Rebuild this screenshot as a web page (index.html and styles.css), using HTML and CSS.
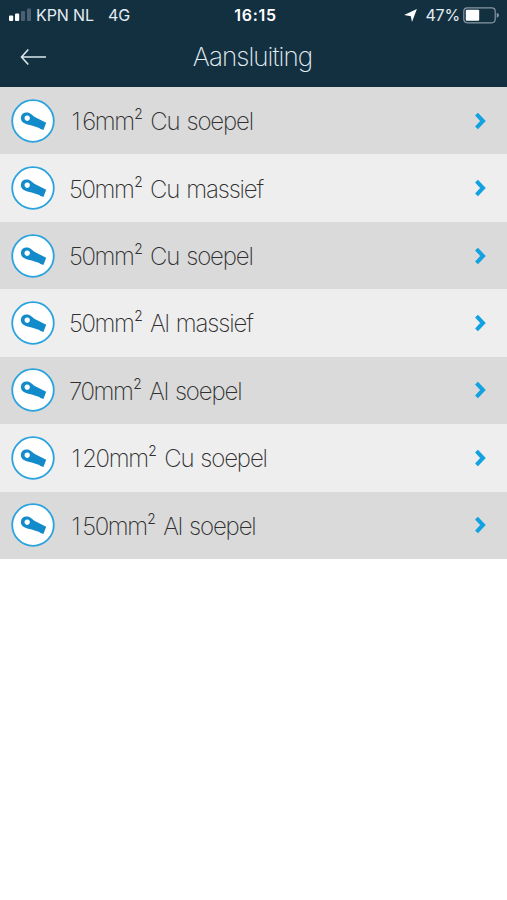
FILE: index.html
```html
<!DOCTYPE html>
<html lang="nl">
<head>
<meta charset="utf-8">
<title>Aansluiting</title>
<link rel="stylesheet" href="styles.css">
</head>
<body>
<svg class="defs" width="0" height="0" aria-hidden="true">
  <symbol id="lug" viewBox="0 0 44 44">
    <circle cx="22" cy="22" r="20.8" fill="#fff" stroke="#2ba3de" stroke-width="1.8"/>
    <path fill="#138bcb" fill-rule="evenodd" d="M9.900 18.500C10.200 15.300 12.500 13.700 15.500 13.600C19.500 13.500 20.800 16.200 23.300 17.700L35.200 23.800L32.400 30.900L29 29.700L28.300 29L20.700 26.600C17.500 25.500 15 25.300 12.500 23.700C10.600 22.400 9.700 20.700 9.900 18.500ZM16.200 16.500a2.700 2.700 0 1 0 .01 0Z"/>
  </symbol>
  <symbol id="chevron" viewBox="0 0 14 20">
    <path d="M2.500 3.200 9 10 2.500 16.800" fill="none" stroke="#12a2e2" stroke-width="4"/>
  </symbol>
</svg>
<header class="header">
  <div class="status">
    <div class="status-left">
      <svg class="signal" width="24" height="14" viewBox="0 0 24 14"><g fill="#fff"><rect x="1" y="7.500" width="4.200" height="5.500" rx="1"/><rect x="7" y="5.500" width="4.200" height="7.500" rx="1"/></g><g fill="#4b6071"><rect x="13" y="3" width="4" height="10" rx="1"/><rect x="19" y="0.500" width="4" height="12.500" rx="1"/></g></svg>
      <span class="carrier">KPN NL</span>
      <span class="network">4G</span>
    </div>
    <span class="time">16:15</span>
    <div class="status-right">
      <svg class="location" width="13" height="13" viewBox="0 0 13 13"><path d="M12.900.1 8 12.900 6.800 7.300.1 6Z" fill="#fff"/></svg>
      <span class="percent">47%</span>
      <svg class="battery" width="37" height="17" viewBox="0 0 37 17"><rect x=".8" y=".8" width="31.400" height="15" rx="3.500" fill="none" stroke="#8796a2" stroke-width="1.200"/><rect x="2.800" y="2.800" width="13.400" height="11" rx="1" fill="#fff"/><path d="M33.700 5.800Q36 6.500 36 8.300T33.700 10.800Z" fill="#8796a2"/></svg>
    </div>
  </div>
  <div class="nav">
    <svg class="back" width="28" height="18" viewBox="0 0 28 18"><path d="M8.300 1.500 1.500 9l6.800 7.500M1.500 9H26" fill="none" stroke="#dce7ec" stroke-width="1.600"/></svg>
    <h1 class="title">Aansluiting</h1>
  </div>
</header>
<main class="list">
  <div class="row"><svg class="icon"><use href="#lug"/></svg><span class="label"><span class="size"><span class="one">1</span>6mm</span><span class="power">²</span> Cu soepel</span><svg class="chevron"><use href="#chevron"/></svg></div>
  <div class="row"><svg class="icon"><use href="#lug"/></svg><span class="label"><span class="size">50mm</span><span class="power">²</span> Cu massief</span><svg class="chevron"><use href="#chevron"/></svg></div>
  <div class="row"><svg class="icon"><use href="#lug"/></svg><span class="label"><span class="size">50mm</span><span class="power">²</span> Cu soepel</span><svg class="chevron"><use href="#chevron"/></svg></div>
  <div class="row"><svg class="icon"><use href="#lug"/></svg><span class="label"><span class="size">50mm</span><span class="power">²</span> Al massief</span><svg class="chevron"><use href="#chevron"/></svg></div>
  <div class="row"><svg class="icon"><use href="#lug"/></svg><span class="label"><span class="size">70mm</span><span class="power">²</span> Al soepel</span><svg class="chevron"><use href="#chevron"/></svg></div>
  <div class="row"><svg class="icon"><use href="#lug"/></svg><span class="label"><span class="size"><span class="one">1</span>20mm</span><span class="power">²</span> Cu soepel</span><svg class="chevron"><use href="#chevron"/></svg></div>
  <div class="row"><svg class="icon"><use href="#lug"/></svg><span class="label"><span class="size"><span class="one">1</span>50mm</span><span class="power">²</span> Al soepel</span><svg class="chevron"><use href="#chevron"/></svg></div>
</main>
</body>
</html>
```
FILE: styles.css
```css
* { box-sizing: border-box; }
body { margin: 0; background: #fff; font-family: Inter, "Liberation Sans", sans-serif; }
.defs { display: block; }
.header { height: 87px; background: #133041; color: #e4edf2; }
.status { display: grid; grid-template-columns: 1fr auto 1fr; align-items: center; height: 30px; padding: 0 7px 0 8px; font-size: 16px; line-height: 30px; }
.status-left, .status-right { display: flex; align-items: center; }
.status-right { justify-content: flex-end; }
.carrier { margin-left: 4px; letter-spacing: -0.1px; }
.network { margin-left: 14px; }
.time { font-weight: 600; color: #fff; letter-spacing: 0.7px; padding-left: 3px; }
.percent { margin: 0 3px 0 8px; letter-spacing: -0.2px; }
.nav { display: grid; grid-template-columns: 60px 1fr 60px; align-items: center; height: 54px; }
.back { margin-left: 20px; }
.title { margin: 0; padding-right: 2px; text-align: center; font-size: 26px; font-weight: 200; letter-spacing: -0.95px; line-height: 54px; }
.list { display: grid; grid-template-rows: repeat(7, 67.430px); }
.row { display: flex; align-items: center; padding: 0 19px 0 11px; background: #dadada; }
.row:nth-child(even) { background: #eee; }
.icon { width: 44px; height: 44px; }
.label { flex: 1; margin-left: 14px; padding-top: 3px; font-size: 24px; font-weight: 200; letter-spacing: -1.15px; line-height: 30px; word-spacing: 1.4px; color: #303030; white-space: nowrap; }
.size { letter-spacing: -1.4px; }
.one { display: inline-block; width: 13.200px; padding-left: 2.500px; }
.power { display: inline-block; width: 9px; margin-left: 0.500px; font-size: 22px; font-weight: 200; line-height: 22px; letter-spacing: 0; transform: scale(0.95, 1.25); transform-origin: 0 60%; }
.chevron { width: 14px; height: 20px; }
```
